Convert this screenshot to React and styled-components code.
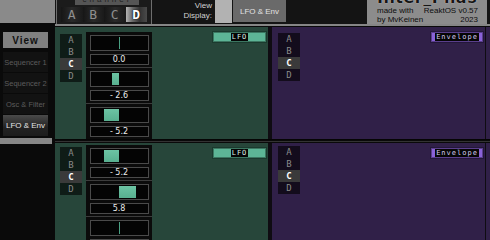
import styled, { createGlobalStyle } from "styled-components";

const GlobalStyle = createGlobalStyle`
  html, body {
    margin: 0;
    padding: 0;
    background: #0a0a0a;
  }
  body {
    font-family: "Liberation Sans", Arial, sans-serif;
  }
`;

const Screen = styled.div`
  width: 490px;
  height: 240px;
  overflow: hidden;
  background: #0a0a0a;
  display: flex;
  flex-direction: column;
`;

/* ---------- top bar ---------- */

const TopBar = styled.div`
  display: flex;
  height: 26px;
  flex-shrink: 0;
`;

const Corner = styled.div`
  width: 55px;
  height: 23px;
  background: #8a8a8a;
`;

const TopRest = styled.div`
  flex: 1;
  display: flex;
  align-items: flex-start;
  background: #141414;
  border-bottom: 2px solid #868686;
`;

const ChannelPanel = styled.div`
  margin-left: 1px;
  width: 94px;
  height: 24px;
  border-left: 1px solid #6e6e6e;
  border-right: 1px solid #6e6e6e;
  background: #1b1b1b;
  display: flex;
  flex-direction: column;
`;

const ChannelLabel = styled.div`
  height: 5px;
  margin: 0 12px 0 18px;
  background: #555;
  overflow: hidden;
  font-size: 8px;
  line-height: 8px;
  color: #222;
  text-align: center;
  letter-spacing: 3px;
  & span {
    display: block;
    margin-top: -4px;
  }
`;

const ChannelButtons = styled.div`
  display: flex;
  margin: 2px 0 0 4px;
  height: 15px;
`;

const ChannelButton = styled.div`
  width: 21.5px;
  height: 15px;
  display: flex;
  align-items: center;
  justify-content: center;
  font-family: "DejaVu Sans Mono", monospace;
  font-size: 13px;
  color: ${(p) => (p.$active ? "#ffffff" : "#8e8e8e")};
  font-weight: ${(p) => (p.$active ? "bold" : "normal")};
  text-shadow: ${(p) => (p.$active ? "0 0 1px #000, 0 0 1px #000" : "none")};
  background: ${(p) =>
    p.$active
      ? "linear-gradient(90deg, #b4b4b4 0%, #6a6a6a 30%, #333 65%, #4a4a4a 100%)"
      : "linear-gradient(90deg, #161616 0%, #2a2a2a 50%, #1a1a1a 100%)"};
`;

const ViewLabel = styled.div`
  width: 59px;
  margin-left: 1px;
  padding-right: 1px;
  padding-top: 1px;
  text-align: right;
  font-size: 8px;
  line-height: 10px;
  color: #d2d2d2;
`;

const LightBlock = styled.div`
  width: 17px;
  height: 23px;
  margin-left: 2px;
  background: #b2b2b2;
`;

const DisplayButton = styled.div`
  width: 53px;
  height: 22px;
  margin-left: 1px;
  background: #6a6a6a;
  color: #e2e2e2;
  font-size: 8px;
  display: flex;
  align-items: center;
  justify-content: center;
`;

const Spacer = styled.div`
  flex: 1;
`;

const InfoPanel = styled.div`
  width: 120px;
  height: 24px;
  margin-right: 3px;
  background: #8c8c8c;
  padding: 0 9px 0 10px;
  box-sizing: border-box;
  display: flex;
  flex-direction: column;
`;

const Title = styled.div`
  height: 6px;
  overflow: hidden;
  & span {
    display: block;
    margin-top: -10px;
    font-family: "DejaVu Sans", sans-serif;
    font-weight: bold;
    font-size: 16px;
    line-height: 16px;
    letter-spacing: 0.5px;
    color: #161616;
    text-shadow: 0 0 1px #eee;
    text-align: center;
  }
`;

const Credits = styled.div`
  display: grid;
  grid-template-columns: 1fr 1fr;
  font-size: 8px;
  line-height: 9px;
  color: #0c0c0c;
  white-space: nowrap;
`;

const CreditRight = styled.span`
  text-align: right;
`;

/* ---------- body ---------- */

const Body = styled.div`
  flex: 1;
  display: flex;
  min-height: 0;
`;

const Sidebar = styled.div`
  width: 52px;
  margin-right: 3px;
  display: flex;
  flex-direction: column;
  padding-top: 6px;
`;

const ViewButton = styled.div`
  margin: 0 4px 0 3px;
  height: 16px;
  background: #808080;
  color: #111;
  font-weight: bold;
  font-size: 10px;
  letter-spacing: 1px;
  display: flex;
  align-items: center;
  justify-content: center;
`;

const NavList = styled.div`
  margin: 4px 4px 0 3px;
  display: flex;
  flex-direction: column;
  gap: 1px;
`;

const NavItem = styled.div`
  height: ${(p) => (p.$active ? 21 : 20)}px;
  display: flex;
  align-items: center;
  justify-content: center;
  font-size: ${(p) => (p.$active ? 8 : 7.5)}px;
  white-space: nowrap;
  color: ${(p) => (p.$active ? "#e4e4e4" : "#5c5c5c")};
  background: ${(p) =>
    p.$active ? "linear-gradient(#4a4a4a, #222 60%, #1c1c1c)" : "#121212"};
`;

const SideBar = styled.div`
  margin-top: 2px;
  height: 6px;
  background: #878787;
`;

const Main = styled.div`
  flex: 1;
  display: flex;
  flex-direction: column;
  padding-top: 1px;
  min-width: 0;
`;

const Row = styled.div`
  display: flex;
  height: ${(p) => p.$height}px;
  flex-shrink: 0;
  background: #0f0c12;
`;

const RowDivider = styled.div`
  height: 4px;
  flex-shrink: 0;
  background: #0a0a0a;
  border-top: 1px solid #050505;
  box-sizing: border-box;
  & div {
    height: 1px;
    margin-top: 1px;
    background: #333;
  }
`;

const Panel = styled.div`
  width: 213px;
  flex-shrink: 0;
  margin-right: ${(p) => p.$gap}px;
  background: ${(p) => p.$bg};
  display: flex;
  align-items: flex-start;
  padding-left: ${(p) => p.$pad}px;
  box-sizing: border-box;
`;

const Peek = styled.div`
  flex: 1;
  margin-left: 1px;
  background: #302048;
`;

const AbcColumn = styled.div`
  width: 22px;
  margin-top: ${(p) => p.$top}px;
  background: rgba(0, 0, 0, 0.6);
  display: flex;
  flex-direction: column;
`;

const AbcItem = styled.div`
  height: 12px;
  display: flex;
  align-items: center;
  justify-content: center;
  font-family: "DejaVu Sans Mono", monospace;
  font-size: 9px;
  color: ${(p) => (p.$active ? "#ffffff" : "#8a8a8a")};
  font-weight: ${(p) => (p.$active ? "bold" : "normal")};
  background: ${(p) => (p.$active ? "#3a3a3a" : "transparent")};
`;

const SliderColumn = styled.div`
  width: 66px;
  margin-left: 4px;
  margin-top: ${(p) => p.$top}px;
  align-self: stretch;
  background: #0b0b0b;
  display: flex;
  flex-direction: column;
`;

const SliderGroup = styled.div`
  padding: 3px 0 2px;
  border-bottom: 1px solid #3c3c3c;
  display: flex;
  flex-direction: column;
  align-items: center;
  gap: 3px;
`;

const Track = styled.div`
  position: relative;
  width: 59px;
  height: 16px;
  box-sizing: border-box;
  border: 1px solid #4a4a4a;
  background: #040404;
`;

const Bar = styled.div`
  position: absolute;
  top: 1px;
  bottom: 1px;
  background: ${(p) =>
    p.$zero ? "#4aa083" : "linear-gradient(#6cc4a4, #58b090)"};
`;

const ValueBox = styled.div`
  width: 59px;
  height: 11px;
  box-sizing: border-box;
  border: 1px solid #4a4a4a;
  background: #040404;
  color: #ececec;
  font-family: "DejaVu Sans", sans-serif;
  font-size: 8px;
  line-height: 9px;
  text-align: center;
`;

const Tag = styled.div`
  margin: 4px 1px 0 auto;
  width: ${(p) => p.$width}px;
  height: 12px;
  box-sizing: border-box;
  border: 1px solid ${(p) => p.$border};
  box-shadow: inset 0 0 0 1px rgba(0, 0, 0, 0.35);
  background: ${(p) => p.$bg};
  display: flex;
  align-items: center;
  justify-content: center;
`;

const TagText = styled.span`
  background: #050505;
  color: ${(p) => p.$color};
  font-family: "DejaVu Sans Mono", monospace;
  font-size: 7px;
  line-height: 8px;
  letter-spacing: 1px;
  padding: 0 1px;
`;

const LETTERS = ["A", "B", "C", "D"];

function formatValue(v) {
  if (v === 0) return "0.0";
  return v < 0 ? `- ${Math.abs(v).toFixed(1)}` : v.toFixed(1);
}

function Slider({ value }) {
  const half = 28.5;
  const width = (Math.abs(value) / 10) * half;
  const left = value < 0 ? half - width : half;
  return (
    <SliderGroup>
      <Track>
        {value === 0 ? (
          <Bar $zero style={{ left: half - 0.5, width: 1 }} />
        ) : (
          <Bar style={{ left, width }} />
        )}
      </Track>
      <ValueBox>{formatValue(value)}</ValueBox>
    </SliderGroup>
  );
}

function Abc({ top }) {
  return (
    <AbcColumn $top={top}>
      {LETTERS.map((l) => (
        <AbcItem key={l} $active={l === "C"}>
          {l}
        </AbcItem>
      ))}
    </AbcColumn>
  );
}

function PanelRow({ height, values, abcTop, sliderTop }) {
  return (
    <Row $height={height}>
      <Panel $bg="#27463a" $gap={4} $pad={5}>
        <Abc top={abcTop} />
        <SliderColumn $top={sliderTop}>
          {values.map((v, i) => (
            <Slider key={i} value={v} />
          ))}
        </SliderColumn>
        <Tag $width={55} $bg="#5db596" $border="#1b3a2e">
          <TagText $color="#d8efe6">LFO</TagText>
        </Tag>
      </Panel>
      <Panel $bg="#302048" $gap={0} $pad={6}>
        <Abc top={abcTop - 1} />
        <Tag $width={54} $bg="#8a62d8" $border="#24173a">
          <TagText $color="#d6cdf2">Envelope</TagText>
        </Tag>
      </Panel>
      <Peek />
    </Row>
  );
}

const NAV = ["Sequencer 1", "Sequencer 2", "Osc & Filter", "LFO & Env"];

export default function App() {
  return (
    <>
      <GlobalStyle />
      <Screen>
        <TopBar>
          <Corner />
          <TopRest>
            <ChannelPanel>
              <ChannelLabel>
                <span>channel</span>
              </ChannelLabel>
              <ChannelButtons>
                {LETTERS.map((l) => (
                  <ChannelButton key={l} $active={l === "D"}>
                    {l}
                  </ChannelButton>
                ))}
              </ChannelButtons>
            </ChannelPanel>
            <ViewLabel>
              View
              <br />
              Display:
            </ViewLabel>
            <LightBlock />
            <DisplayButton>LFO &amp; Env</DisplayButton>
            <Spacer />
            <InfoPanel>
              <Title>
                <span>Inter_Phase</span>
              </Title>
              <Credits>
                <span>made with</span>
                <CreditRight>ReaktOS v0.57</CreditRight>
                <span>by MvKeinen</span>
                <CreditRight>2023</CreditRight>
              </Credits>
            </InfoPanel>
          </TopRest>
        </TopBar>
        <Body>
          <Sidebar>
            <ViewButton>View</ViewButton>
            <NavList>
              {NAV.map((n) => (
                <NavItem key={n} $active={n === "LFO & Env"}>
                  {n}
                </NavItem>
              ))}
            </NavList>
            <SideBar />
          </Sidebar>
          <Main>
            <PanelRow
              height={112}
              values={[0, -2.6, -5.2]}
              abcTop={7}
              sliderTop={5}
            />
            <RowDivider>
              <div />
            </RowDivider>
            <PanelRow
              height={100}
              values={[-5.2, 5.8, 0]}
              abcTop={4}
              sliderTop={2}
            />
          </Main>
        </Body>
      </Screen>
    </>
  );
}
